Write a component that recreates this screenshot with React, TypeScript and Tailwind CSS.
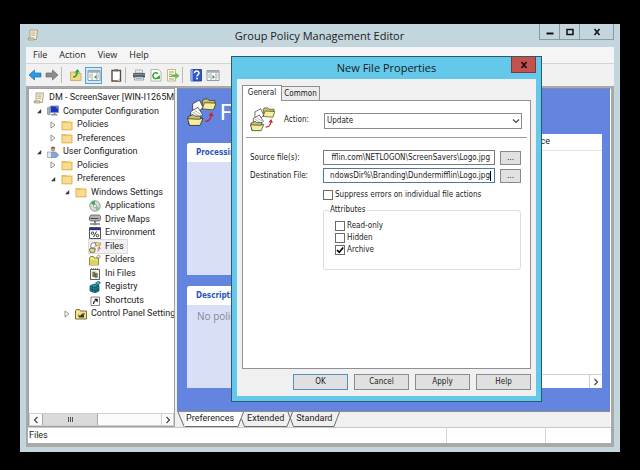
import { useState } from "react";
import type { ReactNode } from "react";

type IconProps = { className?: string };

const ScrollIcon: React.FC<IconProps> = ({ className = "size-3" }) => (
    <svg viewBox="0 0 12 12" className={className} aria-hidden="true">
        <path d="M3 1h7.500L9.500 10.500h-8L3 8z" fill="#f7f0d6" stroke="#9c9271" strokeWidth=".8" />
        <path d="M1 9h6v2H1.500z" fill="#e3d6a8" stroke="#8d8464" strokeWidth=".6" />
        <path d="M4.500 3h4M4.300 4.700h4M4.200 6.400h4" stroke="#a9a28c" strokeWidth=".7" />
    </svg>
);

const FolderIcon: React.FC<IconProps> = ({ className = "size-3" }) => (
    <svg viewBox="0 0 12 12" className={className} aria-hidden="true">
        <path d="M1 2h4.500l1 1H11v8H1z" fill="#e8bf5c" />
        <path d="M1.500 4h9v6.500h-9z" fill="#f8dc8f" />
        <path d="M6 1.500h4.500V3H6z" fill="#f3e3ae" />
        <path d="M.8 2v9h10.400V2.500" fill="none" stroke="#d3a747" strokeWidth=".6" />
    </svg>
);

const ComputerIcon = () => (
    <svg viewBox="0 0 12 12" className="size-3" aria-hidden="true">
        <path d="M0 3l3-1v8l-3-1z" fill="#a9b3bd" stroke="#67727e" strokeWidth=".5" />
        <path d="M3.500 1h8v6.500h-8z" fill="#1c35c4" stroke="#8a96a8" strokeWidth=".9" />
        <path d="M8 1.500h3V4z" fill="#6d8cf2" />
        <path d="M6.500 7.500h2V9h2v1.500H4V9h2.500z" fill="#8b96a2" />
    </svg>
);

const UserIcon = () => (
    <svg viewBox="0 0 12 12" className="size-3" aria-hidden="true">
        <circle cx="6" cy="3" r="2.300" fill="#c59a6d" />
        <path d="M4 2.500c0-2.500 4-2.500 4.200 0L6 2z" fill="#6b5138" />
        <path d="M2 10c0-5 8-6 9.500-.500L9 11.500H4z" fill="#7fa8d6" stroke="#4d6f99" strokeWidth=".5" />
        <path d="M.5 6h4v5.500h-4z" fill="#dfe9f3" stroke="#7a8ea6" strokeWidth=".6" />
    </svg>
);

const AppsIcon = () => (
    <svg viewBox="0 0 12 12" className="size-3" aria-hidden="true">
        <circle cx="6" cy="6" r="5.300" fill="#d5dbd9" stroke="#7a8583" strokeWidth=".7" />
        <path d="M6 6L1.500 3A5.300 5.300 0 0 1 6 .8z" fill="#3fae52" />
        <path d="M6 6l5 2a5 5 0 0 1-3.500 3z" fill="#7cc88a" />
        <circle cx="6" cy="6" r="1.500" fill="#fff" stroke="#7a8583" strokeWidth=".6" />
    </svg>
);

const DriveIcon = () => (
    <svg viewBox="0 0 12 12" className="size-3" aria-hidden="true">
        <path d="M2 1h8.500l1 1.500v3L10.500 7H1.500L.5 6V3z" fill="#b3b3b3" stroke="#4c4c4c" strokeWidth=".7" />
        <path d="M1.500 4.500h8" stroke="#3d3d3d" strokeWidth=".9" />
        <path d="M6 7v2.500M1 10h10" stroke="#444" strokeWidth="1.200" />
        <path d="M4.500 9h3v2.200h-3z" fill="#888" />
    </svg>
);

const EnvIcon = () => (
    <svg viewBox="0 0 12 12" className="size-3" aria-hidden="true">
        <path d="M.5.500h11v11H.500z" fill="#fff" stroke="#4b5160" />
        <path d="M1 1h10v2.200H1z" fill="#27358c" />
        <path d="M7.500 4.500l-3 5.500" stroke="#111" strokeWidth=".8" />
        <circle cx="3.600" cy="6.200" r="1.200" fill="none" stroke="#111" strokeWidth=".8" />
        <circle cx="8.400" cy="8.600" r="1.200" fill="none" stroke="#111" strokeWidth=".8" />
    </svg>
);

// papers flying from one folder to another
const FilesIcon: React.FC<IconProps> = ({ className = "size-[29px]" }) => (
    <svg viewBox="0 0 28 28" className={className} aria-hidden="true">
        <path d="M15 3l1-2h4l1.500 1.500H27l-1 7.500-11.500-.5z" fill="#c9c46a" stroke="#37351a" strokeWidth=".7" />
        <path d="M17 4.500L28 5l-2.500 6.500-11-1z" fill="#f5ee9c" stroke="#37351a" strokeWidth=".7" />
        <path d="M5.500 5.500l6.500-3.500 3.500 7-5 5-5-2z" fill="#fff" stroke="#222" strokeWidth=".7" />
        <path d="M3.500 13l7-4 4.500 7-5 5-6-2z" fill="#fff" stroke="#222" strokeWidth=".7" />
        <path d="M5.500 13.500l6 4M7.500 12l6 4" stroke="#777" strokeWidth=".6" />
        <path d="M1 18l5-2 1.500 1.500h6L12 26H2z" fill="#c9c46a" stroke="#222" strokeWidth=".7" />
        <path d="M.5 20l11 .5 4-1-3 7H2.500z" fill="#f5ee9c" stroke="#222" strokeWidth=".7" />
        <path d="M17.500 22.500c4 0 5.500-2 6-6" fill="none" stroke="#d2232a" strokeWidth="1.300" />
        <path d="M20.800 17l3-3.500 1.900 4.200z" fill="#d2232a" />
    </svg>
);

const FilesSmallIcon = () => (
    <svg viewBox="0 0 12 12" className="size-3" aria-hidden="true">
        <path d="M6.500 1.500h2l.5.500h2.800L11 4.800H6.500z" fill="#e6df7c" stroke="#6a6636" strokeWidth=".5" />
        <path d="M2.500 2.500l3-1.300L7 4.500 4.500 7l-3-1z" fill="#fff" stroke="#444" strokeWidth=".6" />
        <path d="M.5 8l2-1 .6.700h3.200L5.500 11.300H1z" fill="#e6df7c" stroke="#33321c" strokeWidth=".6" />
        <path d="M8.500 10c1.200-.3 1.700-1.300 1.700-2.800M9 7.500l1.200-1.300 1.100 1.400" fill="none" stroke="#d2232a" strokeWidth=".9" />
    </svg>
);

const FoldersIcon = () => (
    <svg viewBox="0 0 12 12" className="size-3" aria-hidden="true">
        <path d="M.5 4l1-1.500h3l1 1.500H9.500v7H.500z" fill="#f0e77b" stroke="#5f5a22" strokeWidth=".7" />
        <path d="M1 6h6.500l2 5H1z" fill="#dcd25e" />
        <path d="M9.500.500v4.500M7.200 2.700h4.600M8 1.200l3 3M11 1.200l-3 3" stroke="#55553a" strokeWidth=".5" />
        <circle cx="9.500" cy="2.700" r=".9" fill="#fff" />
    </svg>
);

const IniIcon = () => (
    <svg viewBox="0 0 12 12" className="size-3" aria-hidden="true">
        <path d="M1.500 1.500h9v10h-9z" fill="#f4f4ee" stroke="#4f4f4f" strokeWidth=".9" />
        <path d="M2 .8h8" stroke="#555" strokeDasharray="1 1" />
        <path d="M3.800 4h2v4.500h-2zM6 5.500h2.300v3.800H6z" fill="#85895a" stroke="#333" strokeWidth=".5" />
        <circle cx="6.700" cy="4.300" r=".9" fill="#cfd06a" />
    </svg>
);

const RegistryIcon = () => (
    <svg viewBox="0 0 12 12" className="size-3" aria-hidden="true">
        <path d="M1 5l4-2 5 1.500V10l-4 1.800L1 10z" fill="#1b9aa5" stroke="#083c45" strokeWidth=".7" />
        <path d="M1 5l5 1.800L10 4.500M6 7v4.500M1 7.500l5 2 4-2M3.500 6v5M8 5.800v5" fill="none" stroke="#06313a" strokeWidth=".6" />
        <path d="M6.500 2L9.500.300l2 1.500L9 4z" fill="#35c3cc" stroke="#083c45" strokeWidth=".7" />
    </svg>
);

const ShortcutIcon = () => (
    <svg viewBox="0 0 12 12" className="size-3" aria-hidden="true">
        <path d="M2 2h8.500v8.500H2z" fill="#fff" stroke="#777" strokeWidth=".9" />
        <path d="M4.500 9c0-2 .6-3 2-3.500" fill="none" stroke="#111" strokeWidth="1.200" />
        <path d="M5 3.800h3.700v3.700z" fill="#111" />
    </svg>
);

const ControlPanelIcon = () => (
    <svg viewBox="0 0 12 12" className="size-3" aria-hidden="true">
        <path d="M.5 3l1-1.500h3L5.500 3h6v8H.500z" fill="#efe487" stroke="#57521f" strokeWidth=".8" />
        <path d="M3 6l2 2 2-2.500 2 1.500v2.500H4z" fill="#3b3a22" />
        <path d="M7.500 5h2v2h-2z" fill="#b4442f" />
    </svg>
);

type Node = {
    label: string;
    icon: ReactNode;
    indent: string;
    state?: "open" | "closed";
};

const nodes: Node[] = [
    { label: "DM - ScreenSaver [WIN-I1265M", icon: <ScrollIcon />, indent: "-ml-2" },
    { label: "Computer Configuration", icon: <ComputerIcon />, indent: "ml-[6px]", state: "open" },
    { label: "Policies", icon: <FolderIcon />, indent: "ml-5", state: "closed" },
    { label: "Preferences", icon: <FolderIcon />, indent: "ml-5", state: "closed" },
    { label: "User Configuration", icon: <UserIcon />, indent: "ml-[6px]", state: "open" },
    { label: "Policies", icon: <FolderIcon />, indent: "ml-5", state: "closed" },
    { label: "Preferences", icon: <FolderIcon />, indent: "ml-5", state: "open" },
    { label: "Windows Settings", icon: <FolderIcon />, indent: "ml-[34px]", state: "open" },
    { label: "Applications", icon: <AppsIcon />, indent: "ml-12" },
    { label: "Drive Maps", icon: <DriveIcon />, indent: "ml-12" },
    { label: "Environment", icon: <EnvIcon />, indent: "ml-12" },
    { label: "Files", icon: <FilesSmallIcon />, indent: "ml-12" },
    { label: "Folders", icon: <FoldersIcon />, indent: "ml-12" },
    { label: "Ini Files", icon: <IniIcon />, indent: "ml-12" },
    { label: "Registry", icon: <RegistryIcon />, indent: "ml-12" },
    { label: "Shortcuts", icon: <ShortcutIcon />, indent: "ml-12" },
    { label: "Control Panel Setting", icon: <ControlPanelIcon />, indent: "ml-[34px]", state: "closed" },
];

const Tree = () => {
    const [selected, setSelected] = useState("Files");

    return (
        <ul className="grid h-[230px] auto-rows-fr">
            {nodes.map((node, i) => (
                <li key={i} className={`flex items-center ${node.indent}`}>
                    <span className="flex w-3 shrink-0 items-center pl-px">
                        {node.state === "open" && (
                            <svg viewBox="0 0 6 6" className="size-[6px]" aria-hidden="true">
                                <path d="M5.200 1v4.200H1z" fill="#333" />
                            </svg>
                        )}
                        {node.state === "closed" && (
                            <svg viewBox="0 0 6 8" className="h-2 w-[6px]" aria-hidden="true">
                                <path d="M1 1l4 3-4 3z" fill="#fff" stroke="#777" strokeWidth=".8" />
                            </svg>
                        )}
                    </span>
                    <button
                        type="button"
                        onClick={() => setSelected(node.label)}
                        className={
                            selected === node.label
                                ? "flex h-[13px] items-center gap-1 bg-[#f1f1f1] pr-[3px] whitespace-nowrap outline outline-[#dcdcdc]"
                                : "flex h-[13px] items-center gap-1 whitespace-nowrap"
                        }
                    >
                        {node.icon}
                        {node.label}
                    </button>
                </li>
            ))}
        </ul>
    );
};

const Chevron: React.FC<{ d: string }> = ({ d }) => (
    <svg viewBox="0 0 8 8" className="size-2" aria-hidden="true">
        <path d={d} fill="none" stroke="#444" strokeWidth="1.200" />
    </svg>
);

const ToolButton: React.FC<{ label: string; active?: boolean; children: ReactNode }> = ({ label, active, children }) => (
    <button
        type="button"
        aria-label={label}
        className={
            active
                ? "flex h-[17px] w-[17px] items-center justify-center border border-[#4fa3d8] bg-[#d3e9f6]"
                : "flex h-[17px] w-[17px] items-center justify-center"
        }
    >
        <svg viewBox="0 0 14 14" className="size-[14px] shrink-0" aria-hidden="true">{children}</svg>
    </button>
);

const ToolSeparator = () => <span className="mx-px h-4 w-px bg-[#b9b9b9]" />;

const PaneGlyph = () => (
    <>
        <path d="M1 2.500h12v10H1z" fill="#fff" stroke="#8a9096" strokeWidth=".9" />
        <path d="M1 2.500h12v2.300H1z" fill="#a4adb5" />
        <path d="M5 5v7.500M10 5v7.500" stroke="#8a9096" strokeWidth=".8" />
        <path d="M2 7h2M2 9h2M11 7h1M11 9h1" stroke="#8a9096" strokeWidth=".8" />
    </>
);

const Toolbar = () => (
    <div className="flex h-[22px] shrink-0 items-center bg-[#f1f1f1]">
        <ToolButton label="Back">
            <path d="M1 7l5.500-5v3H13v4H6.500v3z" fill="#2b9be4" stroke="#1673b5" strokeWidth=".7" />
        </ToolButton>
        <ToolButton label="Forward">
            <path d="M13 7L7.500 2v3H1v4h6.500v3z" fill="#8d8d8d" stroke="#6c6c6c" strokeWidth=".7" />
        </ToolButton>
        <ToolSeparator />
        <div className="w-1" />
        <ToolButton label="Up one level">
            <path d="M1.500 4h4l1 1.500H12V12.500H1.500z" fill="#f3d78a" stroke="#c8a557" strokeWidth=".8" />
            <path d="M4 9c3 0 4-1.500 4-5" fill="none" stroke="#2fa52f" strokeWidth="1.600" />
            <path d="M5.500 4.500L8.500 1l2.500 3.500z" fill="#2fa52f" />
        </ToolButton>
        <div className="w-px" />
        <ToolButton label="Show console tree" active>
            <PaneGlyph />
            <path d="M9.500 7v4L7 9z" fill="#2f9e3d" />
        </ToolButton>
        <div className="w-[5px]" />
        <ToolButton label="Paste">
            <path d="M3 2.500h8.500v10.500H3z" fill="#fff" stroke="#5d4a40" strokeWidth="1.400" />
            <path d="M5.500 1h3.500v2.500H5.500z" fill="#777" />
            <path d="M11 10v3H8z" fill="#bbb" />
        </ToolButton>
        <ToolSeparator />
        <div className="w-[3px]" />
        <ToolButton label="Print">
            <path d="M3.500 2h7v3h-7z" fill="#e9edf0" stroke="#8b8b8b" strokeWidth=".6" />
            <path d="M1 5h12v4.500H1z" fill="#585d63" />
            <path d="M1 6.500h12" stroke="#91979d" strokeWidth=".8" />
            <path d="M3 9h8l.8 3H2.200z" fill="#eef3f6" stroke="#7b8187" strokeWidth=".7" />
            <path d="M4 10.500h6" stroke="#6fa8d0" strokeWidth=".8" />
        </ToolButton>
        <ToolButton label="Refresh">
            <path d="M2 1.500h7.500l2.500 2.500v9H2z" fill="#fff" stroke="#a5a5a5" strokeWidth=".8" />
            <path d="M9.800 8.500A3 3 0 1 1 9 5.500" fill="none" stroke="#2fa52f" strokeWidth="1.500" />
            <path d="M7 10l3.800 1.300.2-4z" fill="#2fa52f" />
        </ToolButton>
        <ToolButton label="Export list">
            <path d="M1.500 1.500h8v11.500h-8z" fill="#fff8d8" stroke="#b5a97c" strokeWidth=".8" />
            <path d="M3 4h5M3 6.300h3M3 8.500h3M3 11h5" stroke="#8c8c8c" strokeWidth=".8" />
            <path d="M5.500 6.500h4v-2l4 3.200-4 3.200V9h-4z" fill="#67bd45" />
        </ToolButton>
        <ToolSeparator />
        <div className="w-[3px]" />
        <ToolButton label="Help">
            <path d="M2 1.500h10.500v11.500H2z" fill="#2f55c8" stroke="#1b3487" strokeWidth=".8" />
            <path d="M2 1.500h1.800v11.500H2z" fill="#8ea6ea" />
            <path d="M5.500 5.300c0-3 4.500-2.800 4.500-.3 0 1.600-2 1.600-2 3.500" fill="none" stroke="#fff" strokeWidth="1.500" />
            <circle cx="8" cy="10.600" r="1" fill="#fff" />
        </ToolButton>
        <ToolButton label="Show action pane">
            <PaneGlyph />
            <path d="M6.500 7v4L9 9z" fill="#2f9e3d" />
        </ToolButton>
    </div>
);

const CaptionButton: React.FC<{ label: string; wide?: boolean; children: ReactNode }> = ({ label, wide, children }) => (
    <button
        type="button"
        aria-label={label}
        className={
            wide
                ? "flex h-4 w-[35px] items-center justify-center border border-t-0 border-[#8c9ba2]"
                : "flex h-4 w-5 items-center justify-center border border-t-0 border-r-0 border-[#8c9ba2]"
        }
    >
        <svg viewBox="0 0 8 8" className="size-2" aria-hidden="true">{children}</svg>
    </button>
);

const Slant: React.FC<{ d: string }> = ({ d }) => (
    <svg viewBox="0 0 8 15" className="h-[15px] w-2 shrink-0" aria-hidden="true">
        <path d={d} fill="none" stroke="#6d6d6d" strokeWidth="1" />
    </svg>
);

const ViewTabs = () => (
    <div className="flex h-4 shrink-0 items-start border-t border-[#8d8d8d] bg-[#f0f0f0]">
        <Slant d="M1 0l6 14.500" />
        <button type="button" className="h-[15px] border-b border-[#6d6d6d] bg-white px-px">Preferences</button>
        <svg viewBox="0 0 12 15" className="h-[15px] w-3 shrink-0" aria-hidden="true">
            <path d="M0 0h8L3 14.500H0z" fill="#fff" />
            <path d="M0 14.500h3L8.500 0M6.500 7l3 7.500H12" fill="none" stroke="#6d6d6d" />
        </svg>
        <button type="button" className="h-[15px] border-b border-[#6d6d6d]">Extended</button>
        <svg viewBox="0 0 12 15" className="h-[15px] w-3 shrink-0" aria-hidden="true">
            <path d="M0 14.500h3L8.500 0M4 0l5.500 14.500H12" fill="none" stroke="#6d6d6d" />
        </svg>
        <button type="button" className="h-[15px] border-b border-[#6d6d6d]">Standard</button>
        <Slant d="M0 14.500h2L7.500 0" />
    </div>
);

const InfoPanel: React.FC<{ title: string; className: string; children?: ReactNode }> = ({ title, className, children }) => (
    <section className={`flex w-[130px] flex-col overflow-hidden rounded-t-[3px] bg-[#d9dff7] ${className}`}>
        <h2 className="flex h-[19px] items-center bg-white pl-[9px] font-['DejaVu_Sans_Condensed','DejaVu_Sans',sans-serif] text-[8px] font-bold text-[#2456bd]">{title}</h2>
        {children}
    </section>
);

const Content = () => (
    <main className="flex flex-1 flex-col bg-[#6384df] pt-[9px] pr-2 pb-[23px] pl-[10px]">
        <div className="flex h-9 shrink-0 items-start gap-1">
            <FilesIcon />
            <h1 className="text-[22px] leading-[30px] text-white">Files</h1>
        </div>
        <div className="flex flex-1 gap-5">
            <div className="flex flex-col gap-[11px] pt-[9px]">
                <InfoPanel title="Processing" className="h-[132px]" />
                <InfoPanel title="Description" className="flex-1">
                    <p className="pt-1 pl-[10px] font-['Open_Sans',sans-serif] text-[10px] leading-[14px] text-[#85889a]">No policies selected</p>
                </InfoPanel>
            </div>
            <div className="flex flex-1 flex-col bg-white">
                <table className="w-full border-b border-[#e2e2e2]">
                    <thead>
                        <tr>
                            <th className="h-4 p-0 pr-[52px] text-right font-normal">Source</th>
                        </tr>
                    </thead>
                </table>
                <div className="mt-auto flex h-[14px] justify-end border-t border-[#d0d0d0]">
                    <button type="button" aria-label="Scroll list right" className="flex w-[13px] items-center justify-center border-l border-[#d0d0d0]">
                        <Chevron d="M2.500 1l3 3-3 3" />
                    </button>
                </div>
            </div>
        </div>
    </main>
);

const CheckBox: React.FC<{ label: string; defaultChecked?: boolean }> = ({ label, defaultChecked }) => (
    <label className="flex h-3 items-center gap-[2px]">
        <span className="grid">
            <input
                type="checkbox"
                defaultChecked={defaultChecked}
                className="peer col-start-1 row-start-1 size-[10px] appearance-none border border-[#6b6b6b] bg-white"
            />
            <svg viewBox="0 0 10 10" className="pointer-events-none invisible col-start-1 row-start-1 size-[10px] peer-checked:visible" aria-hidden="true">
                <path d="M2 5l2.200 2.300L8.200 2.500" fill="none" stroke="#000" strokeWidth="1.700" />
            </svg>
        </span>
        {label}
    </label>
);

const PathField: React.FC<{ id: string; label: string; value: string; focused?: boolean }> = ({ id, label, value, focused }) => (
    <div className="flex h-[15px] items-center">
        <label htmlFor={id} className="w-[73px] shrink-0">{label}</label>
        <span className="relative flex min-w-0 flex-1">
            <input
                id={id}
                type="text"
                defaultValue={value}
                className={
                    focused
                        ? "h-[15px] w-full border border-[#4a7ba6] bg-white pr-1 text-right outline-none"
                        : "h-[15px] w-full border border-[#7a7a7a] bg-white pr-1 text-right outline-none"
                }
            />
            {focused && <span className="absolute top-[3px] right-1 h-[10px] w-px bg-black" />}
        </span>
        <button type="button" aria-label={`Browse ${label}`} className="ml-[5px] flex h-[14px] w-[21px] items-center justify-center border border-[#8a8a8a] bg-[#e1e1e1] leading-[8px]">
            ...
        </button>
    </div>
);

const dialogButtons = ["OK", "Cancel", "Apply", "Help"];

const FileDialog = () => (
    <div
        role="dialog"
        aria-label="New File Properties"
        className="absolute top-[56px] left-[231px] flex w-[311px] flex-col border border-[#285a70] bg-[#63c8e9] px-[5px] pb-[5px] font-['DejaVu_Sans_Condensed','DejaVu_Sans',sans-serif] text-[8px] text-[#1a1a1a]"
    >
        <div className="relative flex h-[22px] items-center justify-center">
            <h2 className="font-['Open_Sans',sans-serif] text-[11px]">New File Properties</h2>
            <button type="button" aria-label="Close dialog" className="absolute top-0 right-0 flex h-4 w-[25px] items-center justify-center border border-t-0 border-[#7b3a38] bg-[#c5504c]">
                <svg viewBox="0 0 8 8" className="size-2" aria-hidden="true">
                    <path d="M1.500 1l5 6M6.500 1l-5 6" stroke="#1c1010" strokeWidth="1.700" />
                </svg>
            </button>
        </div>
        <div className="flex flex-col bg-[#f0f0f0] px-[5px] pt-[6px] pb-[6px]">
            <div className="flex h-[15px] items-end">
                <button type="button" className="relative z-10 -mb-px h-4 w-10 border border-b-0 border-[#8f8f8f] bg-white pb-px">General</button>
                <button type="button" className="h-[14px] w-[38px] border border-b-0 border-l-0 border-[#8f8f8f] bg-[#ececec]">Common</button>
            </div>
            <div className="flex h-[269px] flex-col border border-[#8f9196] bg-white px-[3px] pt-[6px]">
                <div className="flex h-[31px] items-start gap-[9px] border-b border-[#9a9a9a] pl-1">
                    <FilesIcon className="size-[25px]" />
                    <label htmlFor="action" className="w-[31px] pt-[7px] leading-[12px]">Action:</label>
                    <span className="relative mt-[6px] mr-[5px] flex flex-1">
                        <select id="action" defaultValue="Update" className="h-4 w-full appearance-none border border-[#8a8a8a] bg-white pl-[2px]">
                            <option>Create</option>
                            <option>Replace</option>
                            <option>Update</option>
                            <option>Delete</option>
                        </select>
                        <span className="pointer-events-none absolute top-1 right-[2px]">
                            <Chevron d="M1 2.500l3 3 3-3" />
                        </span>
                    </span>
                </div>
                <div className="flex flex-col gap-[3px] pt-3 pr-[6px] pl-1">
                    <PathField id="source" label="Source file(s):" value="fflin.com\NETLOGON\ScreenSavers\Logo.jpg" />
                    <PathField id="target" label="Destination File:" value="ndowsDir%\Branding\Dundermifflin\Logo.jpg" focused />
                    <div className="pt-[3px] pl-[73px]">
                        <CheckBox label="Suppress errors on individual file actions" />
                    </div>
                    <fieldset className="ml-[73px] h-[66px] rounded-[3px] border border-[#dcdcdc] pl-[11px]">
                        <legend className="-ml-[6px] px-px leading-[12px]">Attributes</legend>
                        <div className="pt-1">
                            <CheckBox label="Read-only" />
                            <CheckBox label="Hidden" />
                            <CheckBox label="Archive" defaultChecked />
                        </div>
                    </fieldset>
                </div>
            </div>
            <div className="flex justify-end gap-[6px] pt-[5px]">
                {dialogButtons.map((label) => (
                    <button
                        key={label}
                        type="button"
                        className={
                            label === "OK"
                                ? "h-4 w-[55px] border border-[#4f93bd] bg-[#e0e0e0] leading-[12px]"
                                : "h-4 w-[55px] border border-[#8c8c8c] bg-[#e0e0e0] leading-[12px]"
                        }
                    >
                        {label}
                    </button>
                ))}
            </div>
        </div>
    </div>
);

const menus = ["File", "Action", "View", "Help"];

export default function App() {
    return (
        <div className="relative flex h-screen bg-black px-5 pt-6 pb-[18px] font-['Roboto',sans-serif] text-[9px] text-[#1c1c1c]">
            <div className="flex min-w-0 flex-1 flex-col bg-[#c4d6dd] px-[6px] pb-[5px]">
                <header className="flex h-[23px] shrink-0 items-start">
                    <div className="w-[74px]">
                        <ScrollIcon className="mt-[5px] ml-px size-3" />
                    </div>
                    <p className="flex-1 text-center font-['Open_Sans',sans-serif] text-[11px] leading-[24px]">Group Policy Management Editor</p>
                    <CaptionButton label="Minimize">
                        <path d="M.5 5.500h7" stroke="#111" strokeWidth="2" />
                    </CaptionButton>
                    <CaptionButton label="Maximize">
                        <path d="M1 1.500h6v5H1z" fill="none" stroke="#111" strokeWidth="1.500" />
                    </CaptionButton>
                    <CaptionButton label="Close" wide>
                        <path d="M1.500 1l5 6M6.500 1l-5 6" stroke="#111" strokeWidth="1.500" />
                    </CaptionButton>
                </header>
                <nav className="flex h-[17px] shrink-0 items-center gap-3 border-b border-[#d4d4d4] bg-[#f5f5f5] pl-[7px] font-['Open_Sans',sans-serif]">
                    {menus.map((menu) => (
                        <button key={menu} type="button">{menu}</button>
                    ))}
                </nav>
                <Toolbar />
                <div className="flex min-h-0 flex-1 flex-col border-x-2 border-t-2 border-r-[3px] border-b-4 border-[#a9a9a9] bg-white">
                    <div className="flex min-h-0 flex-1 gap-[2px] bg-[#f0f0f0]">
                        <aside className="flex w-[147px] shrink-0 flex-col border border-[#a0a0a0] bg-white">
                            <div className="flex-1 overflow-hidden pt-[2px]">
                                <Tree />
                            </div>
                            <div className="flex h-[13px] border border-[#d0d0d0] bg-[#fbfbfb]">
                                <button type="button" aria-label="Scroll left" className="flex w-3 items-center justify-center">
                                    <Chevron d="M5.500 1l-3 3 3 3" />
                                </button>
                                <div className="flex w-14 items-center justify-center gap-px border-x border-[#a8a8a8] bg-[#dadada]">
                                    <span className="h-[5px] w-px bg-[#555]" />
                                    <span className="h-[5px] w-px bg-[#555]" />
                                    <span className="h-[5px] w-px bg-[#555]" />
                                </div>
                                <button type="button" aria-label="Scroll right" className="ml-auto flex w-3 items-center justify-center border-l border-[#d0d0d0]">
                                    <Chevron d="M2.500 1l3 3-3 3" />
                                </button>
                            </div>
                        </aside>
                        <div className="flex min-w-0 flex-1 flex-col border-t border-r border-[#7f8cae] border-r-white">
                            <Content />
                            <ViewTabs />
                        </div>
                    </div>
                    <footer className="flex h-4 shrink-0 items-center border-t border-[#c8c8c8] pl-px">
                        <span className="flex-1">Files</span>
                        <span className="h-full w-[99px] border-l border-[#d8d8d8]" />
                        <span className="h-full w-[66px] border-l border-[#d8d8d8]" />
                    </footer>
                </div>
            </div>
            <FileDialog />
        </div>
    );
}
